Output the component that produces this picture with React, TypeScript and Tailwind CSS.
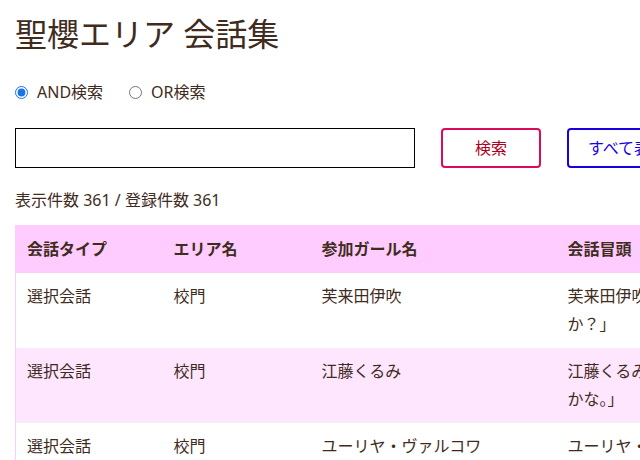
import { useState } from 'react';

const rows = [
  {
    type: '選択会話',
    area: '校門',
    girl: '芙来田伊吹',
    head: '芙来田伊吹「先輩、今日は一緒に帰りませんか？」',
  },
  {
    type: '選択会話',
    area: '校門',
    girl: '江藤くるみ',
    head: '江藤くるみ「ねえ、今日はどんな話をしようかな。」',
  },
  {
    type: '選択会話',
    area: '校門',
    girl: 'ユーリヤ・ヴァルコワ',
    head: 'ユーリヤ・ヴァルコワ「おはようございます、先輩。」',
  },
];

export default function App() {
  const [mode, setMode] = useState('and');

  return (
    <div
      lang="ja"
      className="w-[640px] h-[460px] overflow-hidden bg-white text-[#3f2c1e] px-[15px]"
      style={{ fontFamily: '"Noto Sans", "Noto Sans CJK JP", sans-serif' }}
    >
      <h1 className="text-[32px] leading-[48px] pt-[10px]">聖櫻エリア 会話集</h1>

      <div className="flex items-center mt-[22px] text-[16px] leading-[24px]">
        <label className="flex items-center">
          <input
            type="radio"
            name="mode"
            checked={mode === 'and'}
            onChange={() => setMode('and')}
            className="w-[13px] h-[13px] m-0 accent-[#1a73e8]"
          />
          <span className="ml-[9px]">AND検索</span>
        </label>
        <label className="flex items-center ml-[26px]">
          <input
            type="radio"
            name="mode"
            checked={mode === 'or'}
            onChange={() => setMode('or')}
            className="w-[13px] h-[13px] m-0"
          />
          <span className="ml-[9px]">OR検索</span>
        </label>
      </div>

      <div className="flex mt-[24px] w-[800px]">
        <input type="text" className="w-[400px] h-[40px] border border-black shrink-0" />
        <button className="ml-[26px] w-[100px] h-[40px] border-2 border-[#dc0a5a] rounded-[4px] text-[#b00020] text-[16px] shrink-0">
          検索
        </button>
        <button className="ml-[26px] w-[120px] h-[40px] border-2 border-[#1a00e0] rounded-[4px] text-[#1a00e0] text-[16px] shrink-0">
          すべて表示
        </button>
      </div>

      <p className="mt-[20px] text-[16px] leading-[24px]">表示件数 361 / 登録件数 361</p>

      <table className="mt-[13px] w-[883px] table-fixed border-l border-[#ffccff] border-collapse text-[16px] leading-[28px]">
        <thead>
          <tr className="bg-[#ffccff] text-left">
            <th className="w-[147px] pl-[11px] py-[10px] font-bold">会話タイプ</th>
            <th className="w-[148px] pl-[11px] py-[10px] font-bold">エリア名</th>
            <th className="w-[246px] pl-[11px] py-[10px] font-bold">参加ガール名</th>
            <th className="w-[342px] pl-[11px] py-[10px] font-bold">会話冒頭</th>
          </tr>
        </thead>
        <tbody>
          {rows.map((r, i) => (
            <tr key={i} className={i % 2 === 1 ? 'bg-[#ffe6ff]' : 'bg-white'}>
              <td className="pl-[11px] pt-[9px] pb-[38px] align-top">{r.type}</td>
              <td className="pl-[11px] pt-[9px] align-top">{r.area}</td>
              <td className="pl-[11px] pt-[9px] align-top">{r.girl}</td>
              <td className="pl-[11px] pr-[11px] pt-[9px] pb-[10px] align-top">{r.head}</td>
            </tr>
          ))}
        </tbody>
      </table>
    </div>
  );
}
